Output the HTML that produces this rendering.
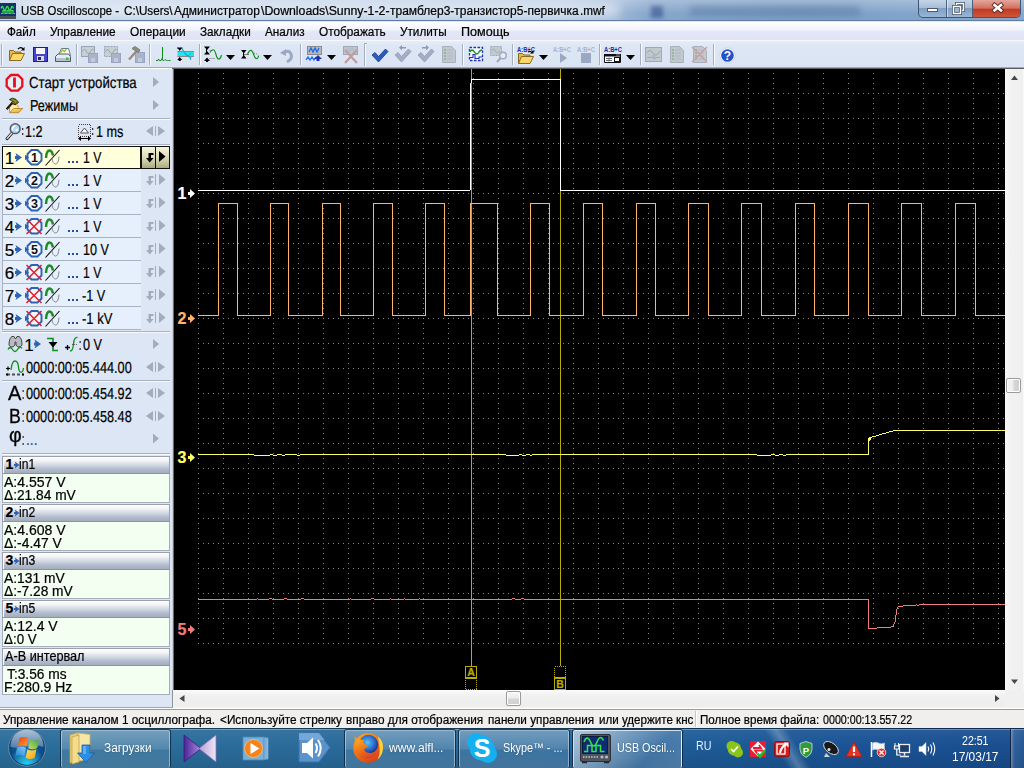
<!DOCTYPE html>
<html lang="ru"><head><meta charset="utf-8"><title>USB Oscilloscope</title>
<style>
html,body{margin:0;padding:0;background:#000;}
body{width:1024px;height:768px;overflow:hidden;font-family:"Liberation Sans",sans-serif;}
#screen{position:relative;width:1024px;height:768px;overflow:hidden;background:#dde6f4;}
.t{position:absolute;-webkit-text-stroke:.22px currentColor;transform-origin:0 0;white-space:pre;font-family:"Liberation Sans",sans-serif;}
.r{position:absolute;}
svg{position:absolute;overflow:visible;}

</style></head>
<body>
<div id="screen">
<!-- 10_title.py -->
<div class="r" style="left:0;top:0;width:1024px;height:22px;background:linear-gradient(90deg,#c3d4e9 0,#bdd0e7 200px,#b4c9e3 560px,#9fb9d8 615px,#86a6cb 650px,#7d9fc6 800px,#86a8cd 1024px)"></div>
<div class="r" style="left:0;top:0;width:1024px;height:20px;background:linear-gradient(180deg,rgba(255,255,255,.28),rgba(255,255,255,0) 70%)"></div>
<div class="r" style="left:690px;top:6px;width:170px;height:10px;background:rgba(60,90,140,.30);filter:blur(3px)"></div>
<div class="r" style="left:651px;top:6px;width:12px;height:12px;background:rgba(40,60,130,.5);filter:blur(2px)"></div>
<div class="r" style="left:20px;top:3px;width:600px;height:15px;background:rgba(255,255,255,.45);filter:blur(5px);border-radius:8px"></div>
<div class="r" style="left:0;top:20px;width:1024px;height:1px;background:#5f7da4"></div>
<div class="r" style="left:0;top:21px;width:1024px;height:1px;background:#dfe9f5"></div>
<svg style="left:0;top:3px" width="16" height="17" viewBox="0 0 16 17"><rect x="0" y="0" width="16" height="13" fill="#16306a"/><rect x="0" y="13" width="16" height="3" fill="#4a4e55"/><path d="M1 5.5q1.2-4 2.5 0t2.5 0t2.5 0t2.5 0t2.5 0" stroke="#35e24a" stroke-width="1.3" fill="none"/><path d="M1 10.5h2v-3h2v3h2v-3h2v3h2v-3h2v3h2" stroke="#35e24a" stroke-width="1.2" fill="none"/></svg>
<span class="t" style="left:21.40px;top:4.00px;font-size:12.30px;line-height:14px;color:#000;transform:scaleX(0.9259);">USB Oscilloscope -</span>
<span class="t" style="left:124.40px;top:4.00px;font-size:12.30px;line-height:14px;color:#000;transform:scaleX(0.9483);">C:\Users\</span>
<span class="t" style="left:173.60px;top:4.00px;font-size:12.30px;line-height:14px;color:#000;transform:scaleX(0.9668);">Администратор</span>
<span class="t" style="left:260.50px;top:4.00px;font-size:12.30px;line-height:14px;color:#000;transform:scaleX(0.9998);">\Downloads\Sunny-1-2-</span>
<span class="t" style="left:390.20px;top:4.00px;font-size:12.30px;line-height:14px;color:#000;transform:scaleX(0.9760);">трамблер3-транзистор5-первичка</span>
<span class="t" style="left:580.00px;top:4.00px;font-size:12.30px;line-height:14px;color:#000;transform:scaleX(0.9514);">.mwf</span>
<div class="r" style="left:918px;top:0;width:103px;height:18px;border:1px solid #3e5572;border-top:none;border-radius:0 0 5px 5px;box-sizing:border-box;overflow:hidden;background:linear-gradient(180deg,#c4d4e6 0,#a9bfd8 45%,#7f9fc3 50%,#9ab6d4 100%)"><div class="r" style="left:27px;top:0;width:1px;height:18px;background:#4b627f"></div><div class="r" style="left:28px;top:0;width:1px;height:18px;background:rgba(255,255,255,.5)"></div><div class="r" style="left:53px;top:0;width:1px;height:18px;background:#4b627f"></div><div class="r" style="left:54px;top:0;width:48px;height:18px;background:linear-gradient(180deg,#e2a79c 0,#d4705f 45%,#c03a26 52%,#cf5a3a 100%)"></div></div>
<svg style="left:918px;top:0" width="103" height="18" viewBox="0 0 103 18"><rect x="9.5" y="8.5" width="10" height="3" fill="#fff" stroke="#4b5a70" stroke-width="1"/><rect x="38.500" y="3.5" width="7" height="7" fill="none" stroke="#4b5a70" stroke-width="3"/><rect x="38.500" y="3.500" width="7" height="7" fill="none" stroke="#fff" stroke-width="1.400"/><rect x="35.500" y="6.500" width="7" height="7" fill="#9fb6d0" stroke="#4b5a70" stroke-width="3"/><rect x="35.500" y="6.500" width="7" height="7" fill="none" stroke="#fff" stroke-width="1.400"/><path d="M76.500 5l6.500 5.500M83 5l-6.500 5.500" stroke="#5c2a22" stroke-width="4.400" stroke-linecap="square"/><path d="M76.500 5l6.500 5.500M83 5l-6.500 5.500" stroke="#fff" stroke-width="2.600" stroke-linecap="square"/></svg>
<div class="r" style="left:0;top:22px;width:1024px;height:19px;background:linear-gradient(180deg,#ffffff 0,#f1f3fb 40%,#e3e6f6 52%,#dfe3f4 100%)"></div>
<div class="r" style="left:0;top:40px;width:1024px;height:1px;background:#f6f8fc"></div>
<span class="t" style="left:7.30px;top:25.00px;font-size:12.30px;line-height:14px;color:#000;transform:scaleX(0.9491);">Файл</span>
<span class="t" style="left:50.30px;top:25.00px;font-size:12.30px;line-height:14px;color:#000;transform:scaleX(0.9609);">Управление</span>
<span class="t" style="left:130.30px;top:25.00px;font-size:12.30px;line-height:14px;color:#000;transform:scaleX(0.9681);">Операции</span>
<span class="t" style="left:200.30px;top:25.00px;font-size:12.30px;line-height:14px;color:#000;transform:scaleX(0.9524);">Закладки</span>
<span class="t" style="left:265.30px;top:25.00px;font-size:12.30px;line-height:14px;color:#000;transform:scaleX(0.9560);">Анализ</span>
<span class="t" style="left:319.30px;top:25.00px;font-size:12.30px;line-height:14px;color:#000;transform:scaleX(0.9602);">Отображать</span>
<span class="t" style="left:400.30px;top:25.00px;font-size:12.30px;line-height:14px;color:#000;transform:scaleX(0.9562);">Утилиты</span>
<span class="t" style="left:461.30px;top:25.00px;font-size:12.30px;line-height:14px;color:#000;transform:scaleX(1.0251);">Помощь</span>
<!-- 20_toolbar.py -->
<div class="r" style="left:0;top:41px;width:1024px;height:26px;background:linear-gradient(180deg,#e6edf8 0,#dde6f4 20%,#dbe4f3 100%)"></div>
<div class="r" style="left:0;top:67px;width:1024px;height:1px;background:#a4a8b0"></div>
<div class="r" style="left:0;top:68px;width:172px;height:1px;background:#ffffff"></div>
<div class="r" style="left:172px;top:68px;width:852px;height:1px;background:#5a5c60"></div>
<svg style="left:0;top:41px" width="1024" height="27" viewBox="0 41 1024 27" fill="none">
<path d="M1.5 44V65" stroke="#a3adbf" shape-rendering="crispEdges"/><path d="M2.5 44V65" stroke="#f6f8fc" shape-rendering="crispEdges"/>
<path d="M76.5 44V65" stroke="#a3adbf" shape-rendering="crispEdges"/><path d="M77.5 44V65" stroke="#fbfcfe" shape-rendering="crispEdges"/>
<path d="M149.5 44V65" stroke="#a3adbf" shape-rendering="crispEdges"/><path d="M150.5 44V65" stroke="#fbfcfe" shape-rendering="crispEdges"/>
<path d="M199.5 44V65" stroke="#a3adbf" shape-rendering="crispEdges"/><path d="M200.5 44V65" stroke="#fbfcfe" shape-rendering="crispEdges"/>
<path d="M300.5 44V65" stroke="#a3adbf" shape-rendering="crispEdges"/><path d="M301.5 44V65" stroke="#fbfcfe" shape-rendering="crispEdges"/>
<path d="M462.5 44V65" stroke="#a3adbf" shape-rendering="crispEdges"/><path d="M463.5 44V65" stroke="#fbfcfe" shape-rendering="crispEdges"/>
<path d="M512.5 44V65" stroke="#a3adbf" shape-rendering="crispEdges"/><path d="M513.5 44V65" stroke="#fbfcfe" shape-rendering="crispEdges"/>
<path d="M599.5 44V65" stroke="#a3adbf" shape-rendering="crispEdges"/><path d="M600.5 44V65" stroke="#fbfcfe" shape-rendering="crispEdges"/>
<path d="M640.5 44V65" stroke="#a3adbf" shape-rendering="crispEdges"/><path d="M641.5 44V65" stroke="#fbfcfe" shape-rendering="crispEdges"/>
<path d="M713.5 44V65" stroke="#a3adbf" shape-rendering="crispEdges"/><path d="M714.5 44V65" stroke="#fbfcfe" shape-rendering="crispEdges"/>
<path d="M364.500 43V66" stroke="#a3adbf" shape-rendering="crispEdges"/><path d="M365.500 43V66" stroke="#fbfcfe" shape-rendering="crispEdges"/><path d="M364 43.500h3" stroke="#a3adbf"/>
<path d="M226 55h9l-4.500 5z" fill="#000"/>
<path d="M263 55h9l-4.500 5z" fill="#000"/>
<path d="M327 55h9l-4.500 5z" fill="#000"/>
<path d="M539 55h9l-4.500 5z" fill="#000"/>
<path d="M626 55h9l-4.500 5z" fill="#000"/>
<g transform="translate(9,47)"><path d="M0.500 13.500V3.500h4l1.500 1.500h6v2" fill="#e8b848" stroke="#8a6a1c"/><path d="M0.500 13.500l3-7h12l-3.500 7z" fill="#fbd66a" stroke="#8a6a1c"/><path d="M9 2q3-3 5.500 0.500" stroke="#000" stroke-width="1.200"/><path d="M15.500 0v3.500h-3.500z" fill="#000"/></g>
<g transform="translate(33,47)"><rect x="0.500" y="0.500" width="14" height="14" fill="#4a46c8" stroke="#24207a"/><rect x="3" y="1" width="9" height="6" fill="#f4f4fa"/><rect x="4" y="9" width="7" height="5" fill="#d8d8e4"/><rect x="5" y="10" width="3" height="3" fill="#24207a"/></g>
<g transform="translate(55,47)"><path d="M3.500 8.500l3-7h7l2 7z" fill="#fff" stroke="#707888"/><path d="M5.500 6l2-3 2 1.500 2-2.500" stroke="#8acb20" stroke-width="1.300"/><path d="M0.500 9.500l2.500-2.500h10.500l2 2.500v5h-15z" fill="#e8ecf2" stroke="#505868"/><rect x="1" y="11" width="14" height="3" fill="#b8c0cc"/><rect x="11" y="10.500" width="2.500" height="2.500" fill="#20d020"/></g>
<g transform="translate(81,46)"><rect x="0.500" y="0.500" width="13" height="10" fill="#c6cfd9" stroke="#98a4b4"/><path d="M1.500 5.500q2-4 4 0t4 0t3.500-1" stroke="#8fb08f"/><rect x="7.500" y="7.500" width="9" height="9" fill="#a9b4cb" stroke="#98a4c0"/><rect x="10" y="12" width="4" height="4" fill="#c3cbdb"/></g>
<g transform="translate(104,46)"><rect x="0.500" y="0.500" width="13" height="10" fill="#c6cfd9" stroke="#98a4b4" stroke-dasharray="2 1"/><path d="M1.500 5.500q2-4 4 0t4 0t3.500-1" stroke="#8fb08f"/><rect x="7.500" y="7.500" width="9" height="9" fill="#a9b4cb" stroke="#98a4c0"/><rect x="10" y="12" width="4" height="4" fill="#c3cbdb"/></g>
<g transform="translate(128,46)"><rect x="7.500" y="6.500" width="9" height="10" fill="#a9b4cb" stroke="#98a4c0"/><rect x="10" y="12" width="4" height="4" fill="#c3cbdb"/><path d="M1 13.500l8-9" stroke="#9a8a7a" stroke-width="2.200"/><path d="M4 2.500l3-2 5 3.500-1.500 2.500z" fill="#8a8f80" stroke="#7a7f74"/></g>
<path d="M162.500 47V60" stroke="#108a18" stroke-width="1" shape-rendering="crispEdges"/><path d="M156 60.500h2l.500-1.500 1 1.500h1.500l1-2 1 2h1l1-1 1.500 1h1l.500-.500.500.500h2" stroke="#108a18" stroke-width="1"/>
<g><rect x="177.500" y="51" width="16.500" height="6" fill="#22e6ee"/><path d="M177.500 51.500h16.500M177.500 56.500h16.500" stroke="#94848a" stroke-width="1"/><path d="M182 48.500l2 3.500q2 3.500 4.500 4.500l2 .800v2.500" stroke="#10b4c4" stroke-width="1.300" fill="none"/><path d="M186 55.500q3 1 5-2.500" stroke="#10b4c4" stroke-width="1"/><path d="M177 47.500h5.500v1h-1l-1.750 2.500l-1.750-2.500h-1zM179.750 57l2.500 3h-1.500v1h-2v-1h-1.500z" fill="#000"/></g>
<g><path d="M204 46.500h6l-3 3.500zM204 54.500h6l-3-3.500zM207 57.500l3 3.500h-2v1h-2v-1h-2z" fill="#000"/><path d="M206.500 48v5" stroke="#000" stroke-width="1"/><path d="M209.500 50.500h4M209.500 58.500h6" stroke="#707070" stroke-dasharray="1 1"/><path d="M210 52.500q1.500-2.800 3-2.800q1.800 0 3 4.800t3 4.500q1.500 0 2.500-4" stroke="#10901c" stroke-width="1.150" fill="none"/></g>
<g><path d="M241 50h5.500l-2.750 3.500zM241 58.500h5.500l-2.750-3.500z" fill="#000"/><path d="M243.500 52v5" stroke="#000"/><path d="M244 54.500h5" stroke="#808080"/><path d="M247.500 54.500q1.500-4.200 3.200-4.200q1.800 0 3 4.200t3 4.200q1.300 0 2-3" stroke="#10901c" stroke-width="1.150" fill="none"/><path d="M254 53.500q2.500-.500 4 1.500" stroke="#808080" stroke-dasharray="1 1" fill="none"/></g>
<g transform="translate(280,48)"><path d="M3 5q6-4 8 1t-4 8" stroke="#9aa8c4" stroke-width="3"/><path d="M0 5l6-4v7z" fill="#9aa8c4"/></g>
<g transform="translate(306,46)"><rect x="1.500" y="0.500" width="14" height="8" fill="#b8b8b8" stroke="#8c8c8c"/><path d="M3 6l2-4 2 4 2-4 2 4 2-4" stroke="#1c6cf0" stroke-width="1.300"/><path d="M0 14l2-3 2 3 2-3 2 3 2-3" stroke="#1c6cf0" stroke-width="1.300"/><path d="M12 9l4 4h-2.500v2h-3v-2h-2.500z" fill="#2030b0"/></g>
<g transform="translate(343,46)"><rect x="0.500" y="0.500" width="14" height="8" fill="#c0c4cc" stroke="#a0a8b4"/><path d="M3 6l2-4 2 4 2-4 2 4" stroke="#a8b8d8"/><path d="M2 4l12 13M14 4l-12 13" stroke="#c09c9c" stroke-width="2.200"/></g>
<path d="M372 55l3-2.500 3.500 4 7-7.500 2.500 2.500-9.500 10.500z" fill="#2a5cc0" stroke="#163a8c" stroke-width="0.800"/>
<path d="M395 55l3-2.500 3.500 4 7-7.500 2.500 2.500-9.500 10.500z" fill="#a3aec6" stroke="#8e9ab4" stroke-width="0.800"/>
<path d="M399 47.500l3-2.500v2h4v1.500h-4v2z" fill="#8e9ab4"/>
<path d="M418 55l3-2.500 3.500 4 7-7.500 2.500 2.500-9.500 10.500z" fill="#a3aec6" stroke="#8e9ab4" stroke-width="0.800"/>
<path d="M429 47.500l-3-2.500v2h-4v1.500h4v2z" fill="#8e9ab4"/>
<g transform="translate(442,46)"><path d="M0.500 0.500h9l4 4v12h-13z" fill="#c2c8d0" stroke="#a8b0bc"/><path d="M2 4h2M2 7h2M2 10h2M2 13h2" stroke="#8cb08c" stroke-width="1.300"/><path d="M5 4h6M5 7h6M5 10h6M5 13h6" stroke="#b0b8c4"/></g>
<g transform="translate(468,46)"><rect x="2" y="2" width="12" height="12" fill="#f4f8ff"/><path d="M1.500 1.500h13v13h-13z" stroke="#2030b0" stroke-width="1.300" stroke-dasharray="2.500 1.500"/><path d="M2 6q2-4 4.500 0t4.500 0q1-2 3-2" stroke="#10901c" stroke-width="1.400"/><path d="M2 11.500h3v-3h2v4h4v-1.500h3" stroke="#2030b0" stroke-width="1.100"/></g>
<g transform="translate(490,46)"><rect x="0.500" y="0.500" width="11" height="9" fill="#c2c8d0" stroke="#a0a8b8" stroke-dasharray="2 1"/><path d="M1.500 5q2-4 4 0t4 0" stroke="#9cb49c"/><circle cx="13" cy="9.500" r="3.300" fill="#e4ebf6" stroke="#a0a8bc" stroke-width="1.400"/><path d="M10.500 12l-3.500 4" stroke="#a0a8bc" stroke-width="2"/></g>
<text x="517" y="52" font-family="Liberation Sans,sans-serif" font-size="7.500" font-weight="bold" fill="#1c2ca4" textLength="18" lengthAdjust="spacingAndGlyphs">A:B+C</text>
<g transform="translate(518,50)"><path d="M0.500 13.500V3.500h4l1.500 1.500h6v2" fill="#e8b848" stroke="#8a6a1c"/><path d="M0.500 13.500l3-7h12l-3.500 7z" fill="#fbd66a" stroke="#8a6a1c"/><path d="M10 2q3-1.500 4 1" stroke="#000" stroke-width="1.200"/><path d="M15.500 0v3.500h-3.500z" fill="#000"/></g>
<text x="553" y="52" font-family="Liberation Sans,sans-serif" font-size="7.500" font-weight="bold" fill="#a8b4cc" textLength="18" lengthAdjust="spacingAndGlyphs">A:B+C</text>
<path d="M560 53v10l7-5z" fill="#9aa8c4"/>
<text x="577" y="52" font-family="Liberation Sans,sans-serif" font-size="7.500" font-weight="bold" fill="#a8b4cc" textLength="18" lengthAdjust="spacingAndGlyphs">A:B+C</text>
<rect x="581" y="53" width="10" height="10" fill="#9aa8c4"/>
<text x="604" y="52" font-family="Liberation Sans,sans-serif" font-size="7.500" font-weight="bold" fill="#1c2ca4" textLength="18" lengthAdjust="spacingAndGlyphs">A:B+C</text>
<g transform="translate(604,54)"><rect x="0" y="0" width="17" height="9" fill="#fff"/><rect x="0" y="0" width="17" height="2.500" fill="#101018"/><path d="M0.500 0v8.500h16v-8.500" stroke="#101018"/><path d="M2 4.500h6M2 6.500h6M5 3.500v4" stroke="#606878"/><rect x="10.500" y="3.500" width="5" height="4" fill="#fff" stroke="#101018"/><path d="M12.500 1h1M14.500 1h1" stroke="#fff"/></g>
<g transform="translate(645,47)"><rect x="0.500" y="0.500" width="16" height="14" fill="#c2c8d0" stroke="#a0a8b4"/><path d="M2 6q3-5 6 0t7-2" stroke="#8fb08f"/><path d="M2 10.500h6v-2h1v3.500h1v-1.500h5" stroke="#a0a8c8"/></g>
<g transform="translate(670,46)"><path d="M0.500 0.500h9l4 4v12h-13z" fill="#c2c8d0" stroke="#a8b0bc"/><path d="M2 4h2M2 7h2M2 10h2M2 13h2" stroke="#8cb08c" stroke-width="1.300"/><path d="M5 4h6M5 7h6M5 10h6M5 13h6" stroke="#b0b8c4"/></g>
<g transform="translate(693,46)"><path d="M0.500 0.500h9l4 4v12h-13z" fill="#c2c8d0" stroke="#a8b0bc"/><path d="M2 4h2M2 7h2M2 10h2M2 13h2" stroke="#8cb08c" stroke-width="1.300"/><path d="M5 4h6M5 7h6M5 10h6M5 13h6" stroke="#b0b8c4"/><path d="M-1 1l15 15M14 1l-15 15" stroke="#cfa0a0" stroke-width="1.500"/></g>
<circle cx="727.500" cy="55.500" r="7.500" fill="#fff"/><circle cx="727.500" cy="55.500" r="6.300" fill="#2450c8"/><circle cx="727.500" cy="55.500" r="7.600" stroke="#c8d0e0" stroke-width="0.800"/><text x="727.500" y="60" text-anchor="middle" font-family="Liberation Sans,sans-serif" font-size="12" font-weight="bold" fill="#fff">?</text>
</svg>
<!-- 30_left.py -->
<div class="r" style="left:0;top:69px;width:172px;height:641px;background:#dde6f4"></div>
<div class="r" style="left:172px;top:69px;width:1px;height:621px;background:#c9cfd8"></div>
<div class="r" style="left:173px;top:69px;width:1px;height:621px;background:#6b6d70"></div>
<div class="r" style="left:2px;top:118px;width:168px;height:1px;background:#a9b2c3"></div><div class="r" style="left:2px;top:119px;width:168px;height:1px;background:#f7f9fd"></div>
<div class="r" style="left:2px;top:144px;width:168px;height:1px;background:#a9b2c3"></div><div class="r" style="left:2px;top:145px;width:168px;height:1px;background:#f7f9fd"></div>
<div class="r" style="left:2px;top:331px;width:168px;height:1px;background:#a9b2c3"></div><div class="r" style="left:2px;top:332px;width:168px;height:1px;background:#f7f9fd"></div>
<div class="r" style="left:2px;top:380px;width:168px;height:1px;background:#a9b2c3"></div><div class="r" style="left:2px;top:381px;width:168px;height:1px;background:#f7f9fd"></div>
<div class="r" style="left:2px;top:453px;width:168px;height:1px;background:#a9b2c3"></div><div class="r" style="left:2px;top:454px;width:168px;height:1px;background:#f7f9fd"></div>
<svg style="left:0;top:69px" width="174" height="400" viewBox="0 69 174 400" fill="none">
<path d="M153 77v10l6-5z" fill="#a3acba"/>
<path d="M153 100v10l6-5z" fill="#a3acba"/>
<path d="M153 126v10l-7-5z" fill="#a3acba"/><path d="M155.500 126v10" stroke="#a3acba" shape-rendering="crispEdges"/><path d="M158 126v10l7-5z" fill="#a3acba"/>
<path d="M153 339v10l6-5z" fill="#a3acba"/>
<path d="M153 362v10l-7-5z" fill="#a3acba"/><path d="M155.500 362v10" stroke="#a3acba" shape-rendering="crispEdges"/><path d="M158 362v10l7-5z" fill="#a3acba"/>
<path d="M153 388v10l-7-5z" fill="#a3acba"/><path d="M155.500 388v10" stroke="#a3acba" shape-rendering="crispEdges"/><path d="M158 388v10l7-5z" fill="#a3acba"/>
<path d="M153 411v10l-7-5z" fill="#a3acba"/><path d="M155.500 411v10" stroke="#a3acba" shape-rendering="crispEdges"/><path d="M158 411v10l7-5z" fill="#a3acba"/>
<path d="M153 433.5v10l6-5z" fill="#a3acba"/>
<path d="M11 75h7l4.300 4.300v7l-4.300 4.300h-7l-4.300-4.300v-7z" stroke="#e4101c" stroke-width="2.300" fill="#fff" fill-opacity=".3"/><path d="M14.500 77.500v10" stroke="#e4101c" stroke-width="2.800"/>
<g><path d="M9.500 112.500v-6.500l1.500-1.500h6l1 1.500v3" fill="#fbe9a8" stroke="#c89c38" stroke-width=".9"/><path d="M9.500 112.700l4.300-4.200h9l-4.300 4.200z" fill="url(#fold)" stroke="#a87c20" stroke-width=".8"/><path d="M6.600 109.300l6-6.800" stroke="#140808" stroke-width="2.100"/><path d="M7.300 108.600l5-5.700" stroke="#d41c1c" stroke-width=".9" stroke-dasharray="1 1"/><path d="M9.500 99.500l3-1.300l3.500 1.200l2.500 2.800l-1 1.200l-1.300-.400l-.700 1.800l-1.800-.600l.300-1.800l-2.300-1.600z" fill="#8c8c14" stroke="#181808" stroke-width=".9"/></g>
<g><path d="M12.300 132.700l-5.300 6" stroke="#2c2c30" stroke-width="3" stroke-linecap="round"/><path d="M12 133l-4.800 5.400" stroke="#e4e6ea" stroke-width="1.300" stroke-linecap="round"/><circle cx="15.200" cy="128.700" r="4.900" fill="#b4d6f8" stroke="#5a5e66" stroke-width="1.500"/><path d="M12.600 130.500q-.800-3.500 2.800-4.700" stroke="#fff" stroke-width="1.600" fill="none"/><circle cx="16.800" cy="130" r="1.600" fill="#e8f4ff"/></g>
<g transform="translate(78,124)"><rect x="0.500" y="0.500" width="12" height="12" stroke="#404040" stroke-dasharray="1 1" shape-rendering="crispEdges"/><path d="M6.500 4l4 5h-8z" stroke="#505050" fill="#fff"/><path d="M1 14.500h11" stroke="#000"/><path d="M0 14.500l3-2.500v5zM13 14.500l-3-2.500v5z" fill="#000"/></g>
<rect x="2.500" y="146.5" width="138" height="22" fill="#ffffdc" stroke="#101010" shape-rendering="crispEdges"/>
<rect x="141.500" y="146.5" width="14" height="22" fill="url(#kh)" stroke="#101010" shape-rendering="crispEdges"/><rect x="155.500" y="146.5" width="14" height="22" fill="url(#kh)" stroke="#101010" shape-rendering="crispEdges"/>
<path d="M159 151v11l6.500-5.500z" fill="#000"/>
<path d="M146 158h7.500l-3.750 4.500z" fill="#000"/><path d="M148.500 158h2.500v-3h2.500v-2h-5z" fill="#000"/>
<path d="M15 156h1.500l-1-3l6.500 4.500l-6.500 4.500l1-3h-1.500z" fill="#2f63ae"/>
<path d="M31.500 150h6l4 4v6.500l-4 4h-6l-4-4v-6.500z" stroke="#2f63b0" stroke-width="1.900" fill="#fff" fill-opacity=".55"/>
<path d="M25 154.7l4 2.800l-4 2.800z" fill="#2f63ae"/>
<text x="34.600" y="162.1" text-anchor="middle" font-family="Liberation Sans,sans-serif" font-size="12.500" font-weight="bold" fill="#101010">1</text>
<path d="M45.500 165.5l14-15.500" stroke="#101010" stroke-width="1.100"/>
<path d="M46 158q0.500-7.500 3.500-7.500q2.500 0 3.500 5" stroke="#1c8c20" stroke-width="2.500"/>
<path d="M52 158.5q0.500 5 3.500 5.500q3 0 3.500-7.500" stroke="#808890" stroke-width="1"/>
<rect x="68" y="161" width="2" height="2" fill="#244c9c"/><rect x="72" y="161" width="2" height="2" fill="#244c9c"/><rect x="76" y="161" width="2" height="2" fill="#244c9c"/>
<rect x="3" y="169" width="138" height="22" fill="#e6f0fc" stroke="none"/>
<path d="M2.500 169v22.500h138" stroke="#a9b2c3" shape-rendering="crispEdges"/>
<path d="M146 181h7.500l-3.750 4.500z" fill="#a3acba"/><path d="M148.500 181h2.500v-3h2.500v-2h-5z" fill="#a3acba"/><path d="M155.500 174v11" stroke="#a3acba" shape-rendering="crispEdges"/><path d="M159 174v11l6.500-5.500z" fill="#a3acba"/>
<path d="M15 179h1.500l-1-3l6.500 4.500l-6.500 4.500l1-3h-1.500z" fill="#2f63ae"/>
<path d="M31.500 173h6l4 4v6.500l-4 4h-6l-4-4v-6.500z" stroke="#2f63b0" stroke-width="1.900" fill="#fff" fill-opacity=".55"/>
<path d="M25 177.7l4 2.800l-4 2.800z" fill="#2f63ae"/>
<text x="34.600" y="185.1" text-anchor="middle" font-family="Liberation Sans,sans-serif" font-size="12.500" font-weight="bold" fill="#101010">2</text>
<path d="M45.500 188.5l14-15.500" stroke="#101010" stroke-width="1.100"/>
<path d="M46 181q0.500-7.500 3.500-7.500q2.500 0 3.500 5" stroke="#1c8c20" stroke-width="2.500"/>
<path d="M52 181.5q0.500 5 3.500 5.500q3 0 3.500-7.500" stroke="#808890" stroke-width="1"/>
<rect x="68" y="184" width="2" height="2" fill="#244c9c"/><rect x="72" y="184" width="2" height="2" fill="#244c9c"/><rect x="76" y="184" width="2" height="2" fill="#244c9c"/>
<rect x="3" y="192" width="138" height="22" fill="#e6f0fc" stroke="none"/>
<path d="M2.500 192v22.500h138" stroke="#a9b2c3" shape-rendering="crispEdges"/>
<path d="M146 204h7.500l-3.750 4.500z" fill="#a3acba"/><path d="M148.500 204h2.500v-3h2.500v-2h-5z" fill="#a3acba"/><path d="M155.500 197v11" stroke="#a3acba" shape-rendering="crispEdges"/><path d="M159 197v11l6.500-5.500z" fill="#a3acba"/>
<path d="M15 202h1.500l-1-3l6.500 4.500l-6.500 4.500l1-3h-1.500z" fill="#2f63ae"/>
<path d="M31.500 196h6l4 4v6.500l-4 4h-6l-4-4v-6.500z" stroke="#2f63b0" stroke-width="1.900" fill="#fff" fill-opacity=".55"/>
<path d="M25 200.7l4 2.800l-4 2.800z" fill="#2f63ae"/>
<text x="34.600" y="208.1" text-anchor="middle" font-family="Liberation Sans,sans-serif" font-size="12.500" font-weight="bold" fill="#101010">3</text>
<path d="M45.500 211.5l14-15.500" stroke="#101010" stroke-width="1.100"/>
<path d="M46 204q0.500-7.500 3.500-7.500q2.500 0 3.500 5" stroke="#1c8c20" stroke-width="2.500"/>
<path d="M52 204.5q0.500 5 3.500 5.500q3 0 3.500-7.500" stroke="#808890" stroke-width="1"/>
<rect x="68" y="207" width="2" height="2" fill="#244c9c"/><rect x="72" y="207" width="2" height="2" fill="#244c9c"/><rect x="76" y="207" width="2" height="2" fill="#244c9c"/>
<rect x="3" y="215" width="138" height="22" fill="#e6f0fc" stroke="none"/>
<path d="M2.500 215v22.500h138" stroke="#a9b2c3" shape-rendering="crispEdges"/>
<path d="M146 227h7.500l-3.750 4.500z" fill="#a3acba"/><path d="M148.500 227h2.500v-3h2.500v-2h-5z" fill="#a3acba"/><path d="M155.500 220v11" stroke="#a3acba" shape-rendering="crispEdges"/><path d="M159 220v11l6.500-5.500z" fill="#a3acba"/>
<path d="M15 225h1.500l-1-3l6.500 4.500l-6.500 4.500l1-3h-1.500z" fill="#2f63ae"/>
<path d="M31.500 219h6l4 4v6.500l-4 4h-6l-4-4v-6.500z" stroke="#2f63b0" stroke-width="1.900" fill="#fff" fill-opacity=".55"/>
<path d="M25 223.7l4 2.800l-4 2.800z" fill="#2f63ae"/>
<path d="M26.500 219l15 15M41.500 219l-15 15" stroke="#e8202c" stroke-width="1.600"/>
<path d="M45.500 234.5l14-15.500" stroke="#101010" stroke-width="1.100"/>
<path d="M46 227q0.500-7.500 3.500-7.500q2.500 0 3.500 5" stroke="#1c8c20" stroke-width="2.500"/>
<path d="M52 227.5q0.500 5 3.500 5.500q3 0 3.500-7.500" stroke="#808890" stroke-width="1"/>
<rect x="68" y="230" width="2" height="2" fill="#244c9c"/><rect x="72" y="230" width="2" height="2" fill="#244c9c"/><rect x="76" y="230" width="2" height="2" fill="#244c9c"/>
<rect x="3" y="238" width="138" height="22" fill="#e6f0fc" stroke="none"/>
<path d="M2.500 238v22.500h138" stroke="#a9b2c3" shape-rendering="crispEdges"/>
<path d="M146 250h7.500l-3.750 4.500z" fill="#a3acba"/><path d="M148.500 250h2.500v-3h2.500v-2h-5z" fill="#a3acba"/><path d="M155.500 243v11" stroke="#a3acba" shape-rendering="crispEdges"/><path d="M159 243v11l6.500-5.500z" fill="#a3acba"/>
<path d="M15 248h1.500l-1-3l6.500 4.500l-6.500 4.500l1-3h-1.500z" fill="#2f63ae"/>
<path d="M31.500 242h6l4 4v6.500l-4 4h-6l-4-4v-6.500z" stroke="#2f63b0" stroke-width="1.900" fill="#fff" fill-opacity=".55"/>
<path d="M25 246.7l4 2.800l-4 2.800z" fill="#2f63ae"/>
<text x="34.600" y="254.1" text-anchor="middle" font-family="Liberation Sans,sans-serif" font-size="12.500" font-weight="bold" fill="#101010">5</text>
<path d="M45.500 257.5l14-15.500" stroke="#101010" stroke-width="1.100"/>
<path d="M46 250q0.500-7.500 3.500-7.500q2.500 0 3.500 5" stroke="#1c8c20" stroke-width="2.500"/>
<path d="M52 250.5q0.500 5 3.500 5.500q3 0 3.500-7.500" stroke="#808890" stroke-width="1"/>
<rect x="68" y="253" width="2" height="2" fill="#244c9c"/><rect x="72" y="253" width="2" height="2" fill="#244c9c"/><rect x="76" y="253" width="2" height="2" fill="#244c9c"/>
<rect x="3" y="261" width="138" height="22" fill="#e6f0fc" stroke="none"/>
<path d="M2.500 261v22.500h138" stroke="#a9b2c3" shape-rendering="crispEdges"/>
<path d="M146 273h7.500l-3.750 4.500z" fill="#a3acba"/><path d="M148.500 273h2.500v-3h2.500v-2h-5z" fill="#a3acba"/><path d="M155.500 266v11" stroke="#a3acba" shape-rendering="crispEdges"/><path d="M159 266v11l6.500-5.500z" fill="#a3acba"/>
<path d="M15 271h1.500l-1-3l6.500 4.500l-6.500 4.500l1-3h-1.500z" fill="#2f63ae"/>
<path d="M31.500 265h6l4 4v6.500l-4 4h-6l-4-4v-6.500z" stroke="#2f63b0" stroke-width="1.900" fill="#fff" fill-opacity=".55"/>
<path d="M25 269.7l4 2.800l-4 2.800z" fill="#2f63ae"/>
<path d="M26.500 265l15 15M41.500 265l-15 15" stroke="#e8202c" stroke-width="1.600"/>
<path d="M45.500 280.5l14-15.500" stroke="#101010" stroke-width="1.100"/>
<path d="M46 273q0.500-7.500 3.500-7.500q2.500 0 3.500 5" stroke="#1c8c20" stroke-width="2.500"/>
<path d="M52 273.5q0.500 5 3.500 5.500q3 0 3.500-7.500" stroke="#808890" stroke-width="1"/>
<rect x="68" y="276" width="2" height="2" fill="#244c9c"/><rect x="72" y="276" width="2" height="2" fill="#244c9c"/><rect x="76" y="276" width="2" height="2" fill="#244c9c"/>
<rect x="3" y="284" width="138" height="22" fill="#e6f0fc" stroke="none"/>
<path d="M2.500 284v22.500h138" stroke="#a9b2c3" shape-rendering="crispEdges"/>
<path d="M146 296h7.500l-3.750 4.500z" fill="#a3acba"/><path d="M148.500 296h2.500v-3h2.500v-2h-5z" fill="#a3acba"/><path d="M155.500 289v11" stroke="#a3acba" shape-rendering="crispEdges"/><path d="M159 289v11l6.500-5.500z" fill="#a3acba"/>
<path d="M15 294h1.500l-1-3l6.500 4.500l-6.500 4.500l1-3h-1.500z" fill="#2f63ae"/>
<path d="M31.500 288h6l4 4v6.500l-4 4h-6l-4-4v-6.500z" stroke="#2f63b0" stroke-width="1.900" fill="#fff" fill-opacity=".55"/>
<path d="M25 292.7l4 2.800l-4 2.800z" fill="#2f63ae"/>
<path d="M26.500 288l15 15M41.500 288l-15 15" stroke="#e8202c" stroke-width="1.600"/>
<path d="M45.500 303.5l14-15.500" stroke="#101010" stroke-width="1.100"/>
<path d="M46 296q0.500-7.500 3.500-7.500q2.500 0 3.500 5" stroke="#1c8c20" stroke-width="2.500"/>
<path d="M52 296.5q0.500 5 3.500 5.500q3 0 3.500-7.500" stroke="#808890" stroke-width="1"/>
<rect x="68" y="299" width="2" height="2" fill="#244c9c"/><rect x="72" y="299" width="2" height="2" fill="#244c9c"/><rect x="76" y="299" width="2" height="2" fill="#244c9c"/>
<rect x="3" y="307" width="138" height="22" fill="#e6f0fc" stroke="none"/>
<path d="M2.500 307v22.500h138" stroke="#a9b2c3" shape-rendering="crispEdges"/>
<path d="M146 319h7.500l-3.750 4.500z" fill="#a3acba"/><path d="M148.500 319h2.500v-3h2.500v-2h-5z" fill="#a3acba"/><path d="M155.500 312v11" stroke="#a3acba" shape-rendering="crispEdges"/><path d="M159 312v11l6.500-5.500z" fill="#a3acba"/>
<path d="M15 317h1.500l-1-3l6.500 4.500l-6.500 4.500l1-3h-1.500z" fill="#2f63ae"/>
<path d="M31.500 311h6l4 4v6.500l-4 4h-6l-4-4v-6.500z" stroke="#2f63b0" stroke-width="1.900" fill="#fff" fill-opacity=".55"/>
<path d="M25 315.7l4 2.800l-4 2.800z" fill="#2f63ae"/>
<path d="M26.500 311l15 15M41.500 311l-15 15" stroke="#e8202c" stroke-width="1.600"/>
<path d="M45.500 326.5l14-15.500" stroke="#101010" stroke-width="1.100"/>
<path d="M46 319q0.500-7.500 3.500-7.500q2.500 0 3.500 5" stroke="#1c8c20" stroke-width="2.500"/>
<path d="M52 319.5q0.500 5 3.500 5.500q3 0 3.500-7.500" stroke="#808890" stroke-width="1"/>
<rect x="68" y="322" width="2" height="2" fill="#244c9c"/><rect x="72" y="322" width="2" height="2" fill="#244c9c"/><rect x="76" y="322" width="2" height="2" fill="#244c9c"/>
<defs><linearGradient id="fold" x1="0" y1="0" x2="1" y2="1"><stop offset="0" stop-color="#fde48c"/><stop offset="1" stop-color="#e8a420"/></linearGradient><linearGradient id="kh" x1="0" y1="0" x2="0" y2="1"><stop offset="0" stop-color="#f6f6e0"/><stop offset=".5" stop-color="#dcdcb8"/><stop offset="1" stop-color="#a8a880"/></linearGradient></defs>
<g transform="translate(8,336)"><path d="M1 9q0-7 3-8.500h2l1 2h1l1-2h2q3 1.500 3 8.500q-1 2-3 2t-3-2v-3h-1v3q-1 2-3 2t-3-2z" fill="#b8bcc0" stroke="#404448" stroke-width="1"/><path d="M0 13.500q2-4 4.500 0t5 0t4.500-1" stroke="#10901c" stroke-width="1.300"/></g>
<path d="M34 342.5h1.500l-1-3l6.500 4.500l-6.500 4.500l1-3h-1.500z" fill="#2f63ae"/>
<path d="M47 338.500h6v12h5" stroke="#10901c" stroke-width="1.600"/><path d="M48.500 342h9l-4.500 5.500z" fill="#000"/>
<path d="M65 347.500h5M67.500 345v5" stroke="#000" stroke-width="1.300"/><path d="M70 351q3 0 3.500-7t4-6.500" stroke="#10901c" stroke-width="1.300"/><path d="M72 344.500h6" stroke="#606060" stroke-dasharray="1 1"/>
<rect x="79.5" y="341" width="1.300" height="2" fill="#383838"/><rect x="79.5" y="348" width="1.300" height="2" fill="#383838"/>
<g transform="translate(6,360)"><path d="M0 8.500h4M2 6.500v4" stroke="#000" stroke-width="1.200"/><path d="M5 10q1-9 4-9t3.500 6t3 5q1.500 0 2-4" stroke="#10901c" stroke-width="1.300"/><path d="M1 14.500h16" stroke="#505050" stroke-width="2" stroke-dasharray="3 2"/><path d="M0 14.500h2M16 14.500h2" stroke="#000" stroke-width="2"/></g>
<rect x="22.5" y="390" width="1.300" height="2" fill="#383838"/><rect x="22.5" y="397" width="1.300" height="2" fill="#383838"/>
<rect x="22.5" y="413" width="1.300" height="2" fill="#383838"/><rect x="22.5" y="420" width="1.300" height="2" fill="#383838"/>
<rect x="22.5" y="436" width="1.300" height="2" fill="#383838"/><rect x="22.5" y="443" width="1.300" height="2" fill="#383838"/>
<rect x="22" y="128" width="1.300" height="2" fill="#383838"/><rect x="22" y="133" width="1.300" height="2" fill="#383838"/>
<rect x="92" y="128" width="1.300" height="2" fill="#383838"/><rect x="92" y="133" width="1.300" height="2" fill="#383838"/>
</svg>
<span class="t" style="left:29.30px;top:74.00px;font-size:16.00px;line-height:17px;color:#000;transform:rotate(0.05deg) scaleX(0.8262);">Старт устройства</span>
<span class="t" style="left:29.50px;top:97.00px;font-size:16.00px;line-height:17px;color:#000;transform:rotate(0.05deg) scaleX(0.7891);">Режимы</span>
<span class="t" style="left:25.30px;top:123.00px;font-size:16.00px;line-height:17px;color:#000;transform:rotate(0.05deg) scaleX(0.7868);">1:2</span>
<span class="t" style="left:95.60px;top:123.00px;font-size:16.00px;line-height:17px;color:#000;transform:rotate(0.05deg) scaleX(0.7903);">1 ms</span>
<span class="t" style="left:4.80px;top:149.00px;font-size:17.00px;line-height:19px;color:#000;-webkit-text-stroke:.2px #000;">1</span>
<span class="t" style="left:83.20px;top:149.00px;font-size:16.00px;line-height:17px;color:#000;transform:rotate(0.05deg) scaleX(0.7620);">1 V</span>
<span class="t" style="left:4.80px;top:172.00px;font-size:17.00px;line-height:19px;color:#000;-webkit-text-stroke:.2px #000;">2</span>
<span class="t" style="left:83.20px;top:172.00px;font-size:16.00px;line-height:17px;color:#000;transform:rotate(0.05deg) scaleX(0.7620);">1 V</span>
<span class="t" style="left:4.80px;top:195.00px;font-size:17.00px;line-height:19px;color:#000;-webkit-text-stroke:.2px #000;">3</span>
<span class="t" style="left:83.20px;top:195.00px;font-size:16.00px;line-height:17px;color:#000;transform:rotate(0.05deg) scaleX(0.7620);">1 V</span>
<span class="t" style="left:4.80px;top:218.00px;font-size:17.00px;line-height:19px;color:#000;-webkit-text-stroke:.2px #000;">4</span>
<span class="t" style="left:83.20px;top:218.00px;font-size:16.00px;line-height:17px;color:#000;transform:rotate(0.05deg) scaleX(0.7620);">1 V</span>
<span class="t" style="left:4.80px;top:241.00px;font-size:17.00px;line-height:19px;color:#000;-webkit-text-stroke:.2px #000;">5</span>
<span class="t" style="left:83.20px;top:241.00px;font-size:16.00px;line-height:17px;color:#000;transform:rotate(0.05deg) scaleX(0.7839);">10 V</span>
<span class="t" style="left:4.80px;top:264.00px;font-size:17.00px;line-height:19px;color:#000;-webkit-text-stroke:.2px #000;">6</span>
<span class="t" style="left:83.20px;top:264.00px;font-size:16.00px;line-height:17px;color:#000;transform:rotate(0.05deg) scaleX(0.7620);">1 V</span>
<span class="t" style="left:4.80px;top:287.00px;font-size:17.00px;line-height:19px;color:#000;-webkit-text-stroke:.2px #000;">7</span>
<span class="t" style="left:82.20px;top:287.00px;font-size:16.00px;line-height:17px;color:#000;transform:rotate(0.05deg) scaleX(0.7940);">-1 V</span>
<span class="t" style="left:4.80px;top:310.00px;font-size:17.00px;line-height:19px;color:#000;-webkit-text-stroke:.2px #000;">8</span>
<span class="t" style="left:82.20px;top:310.00px;font-size:16.00px;line-height:17px;color:#000;transform:rotate(0.05deg) scaleX(0.8114);">-1 kV</span>
<span class="t" style="left:24.20px;top:336.00px;font-size:17.00px;line-height:19px;color:#000;-webkit-text-stroke:.2px #000;">1</span>
<span class="t" style="left:82.50px;top:336.00px;font-size:16.00px;line-height:17px;color:#000;transform:rotate(0.05deg) scaleX(0.7912);">0 V</span>
<span class="t" style="left:25.80px;top:359.00px;font-size:16.00px;line-height:17px;color:#000;transform:rotate(0.05deg) scaleX(0.7920);">0000:00:05.444.00</span>
<span class="t" style="left:7.60px;top:382.00px;font-size:20.30px;line-height:22px;color:#000;transform:scaleX(0.9896);-webkit-text-stroke:.3px #000;">A</span>
<span class="t" style="left:25.80px;top:385.00px;font-size:16.00px;line-height:17px;color:#000;transform:rotate(0.05deg) scaleX(0.7920);">0000:00:05.454.92</span>
<span class="t" style="left:9.20px;top:405.00px;font-size:20.30px;line-height:22px;color:#000;transform:scaleX(0.8714);-webkit-text-stroke:.3px #000;">B</span>
<span class="t" style="left:25.80px;top:408.00px;font-size:16.00px;line-height:17px;color:#000;transform:rotate(0.05deg) scaleX(0.7920);">0000:00:05.458.48</span>
<span class="t" style="left:8.80px;top:424.00px;font-size:20.30px;line-height:22px;color:#000;transform:scaleX(0.9647);-webkit-text-stroke:.3px #000;">φ</span>
<span class="t" style="left:25.50px;top:431.00px;font-size:16.00px;line-height:17px;color:#244c9c;transform:rotate(0.05deg) scaleX(0.8623);">...</span>
<div class="r" style="left:2px;top:456px;width:168px;height:18px;box-sizing:border-box;border:1px solid #9aa2b1;border-bottom-color:#8a92a3;box-shadow:inset 1px 1px 0 #fff;background:linear-gradient(180deg,#ffffff 0,#f2f4f8 22%,#d2d8e3 50%,#b4bccb 75%,#a3acbe 100%)"></div>
<div class="r" style="left:2px;top:474px;width:168px;height:29px;box-sizing:border-box;border:1px solid #a6adb9;border-top:none;background:#f3fff0"></div>
<span class="t" style="left:5.60px;top:456.00px;font-size:14.00px;line-height:16px;color:#000;font-weight:bold;">1</span>
<svg style="left:13.500px;top:461px" width="6" height="8" viewBox="0 0 6 8"><path d="M0 3h1.500l-0.700-2.500l4.700 3.500l-4.700 3.500l0.700-2.500h-1.500z" fill="#2f63ae"/></svg>
<span class="t" style="left:19.30px;top:456.00px;font-size:14.50px;line-height:16px;color:#000;transform:scaleX(0.8373);">in1</span>
<span class="t" style="left:4.30px;top:474.00px;font-size:14.50px;line-height:16px;color:#000;transform:scaleX(0.9690);">A:4.557 V</span>
<span class="t" style="left:4.30px;top:487.00px;font-size:14.50px;line-height:16px;color:#000;transform:scaleX(0.9463);">Δ:21.84 mV</span>
<div class="r" style="left:2px;top:504px;width:168px;height:18px;box-sizing:border-box;border:1px solid #9aa2b1;border-bottom-color:#8a92a3;box-shadow:inset 1px 1px 0 #fff;background:linear-gradient(180deg,#ffffff 0,#f2f4f8 22%,#d2d8e3 50%,#b4bccb 75%,#a3acbe 100%)"></div>
<div class="r" style="left:2px;top:522px;width:168px;height:29px;box-sizing:border-box;border:1px solid #a6adb9;border-top:none;background:#f3fff0"></div>
<span class="t" style="left:5.60px;top:504.00px;font-size:14.00px;line-height:16px;color:#000;font-weight:bold;">2</span>
<svg style="left:13.500px;top:509px" width="6" height="8" viewBox="0 0 6 8"><path d="M0 3h1.500l-0.700-2.500l4.700 3.500l-4.700 3.500l0.700-2.500h-1.500z" fill="#2f63ae"/></svg>
<span class="t" style="left:19.30px;top:504.00px;font-size:14.50px;line-height:16px;color:#000;transform:scaleX(0.8373);">in2</span>
<span class="t" style="left:4.30px;top:522.00px;font-size:14.50px;line-height:16px;color:#000;transform:scaleX(0.9690);">A:4.608 V</span>
<span class="t" style="left:4.30px;top:535.00px;font-size:14.50px;line-height:16px;color:#000;transform:scaleX(0.9544);">Δ:-4.47 V</span>
<div class="r" style="left:2px;top:552px;width:168px;height:18px;box-sizing:border-box;border:1px solid #9aa2b1;border-bottom-color:#8a92a3;box-shadow:inset 1px 1px 0 #fff;background:linear-gradient(180deg,#ffffff 0,#f2f4f8 22%,#d2d8e3 50%,#b4bccb 75%,#a3acbe 100%)"></div>
<div class="r" style="left:2px;top:570px;width:168px;height:29px;box-sizing:border-box;border:1px solid #a6adb9;border-top:none;background:#f3fff0"></div>
<span class="t" style="left:5.60px;top:552.00px;font-size:14.00px;line-height:16px;color:#000;font-weight:bold;">3</span>
<svg style="left:13.500px;top:557px" width="6" height="8" viewBox="0 0 6 8"><path d="M0 3h1.500l-0.700-2.500l4.700 3.500l-4.700 3.500l0.700-2.500h-1.500z" fill="#2f63ae"/></svg>
<span class="t" style="left:19.30px;top:552.00px;font-size:14.50px;line-height:16px;color:#000;transform:scaleX(0.8373);">in3</span>
<span class="t" style="left:4.30px;top:570.00px;font-size:14.50px;line-height:16px;color:#000;transform:scaleX(0.9534);">A:131 mV</span>
<span class="t" style="left:4.30px;top:583.00px;font-size:14.50px;line-height:16px;color:#000;transform:scaleX(0.9471);">Δ:-7.28 mV</span>
<div class="r" style="left:2px;top:600px;width:168px;height:18px;box-sizing:border-box;border:1px solid #9aa2b1;border-bottom-color:#8a92a3;box-shadow:inset 1px 1px 0 #fff;background:linear-gradient(180deg,#ffffff 0,#f2f4f8 22%,#d2d8e3 50%,#b4bccb 75%,#a3acbe 100%)"></div>
<div class="r" style="left:2px;top:618px;width:168px;height:29px;box-sizing:border-box;border:1px solid #a6adb9;border-top:none;background:#f3fff0"></div>
<span class="t" style="left:5.60px;top:600.00px;font-size:14.00px;line-height:16px;color:#000;font-weight:bold;">5</span>
<svg style="left:13.500px;top:605px" width="6" height="8" viewBox="0 0 6 8"><path d="M0 3h1.500l-0.700-2.500l4.700 3.500l-4.700 3.500l0.700-2.500h-1.500z" fill="#2f63ae"/></svg>
<span class="t" style="left:19.30px;top:600.00px;font-size:14.50px;line-height:16px;color:#000;transform:scaleX(0.8373);">in5</span>
<span class="t" style="left:4.30px;top:618.00px;font-size:14.50px;line-height:16px;color:#000;transform:scaleX(0.9656);">A:12.4 V</span>
<span class="t" style="left:4.30px;top:631.00px;font-size:14.50px;line-height:16px;color:#000;transform:scaleX(0.9217);">Δ:0 V</span>
<div class="r" style="left:2px;top:648px;width:168px;height:18px;box-sizing:border-box;border:1px solid #9aa2b1;border-bottom-color:#8a92a3;box-shadow:inset 1px 1px 0 #fff;background:linear-gradient(180deg,#ffffff 0,#f2f4f8 22%,#d2d8e3 50%,#b4bccb 75%,#a3acbe 100%)"></div>
<div class="r" style="left:2px;top:666px;width:168px;height:29px;box-sizing:border-box;border:1px solid #a6adb9;border-top:none;background:#f3fff0"></div>
<span class="t" style="left:4.50px;top:648.00px;font-size:14.50px;line-height:16px;color:#000;transform:scaleX(0.8739);">A-B интервал</span>
<span class="t" style="left:7.20px;top:666.00px;font-size:14.50px;line-height:16px;color:#000;transform:scaleX(0.9483);">T:3.56 ms</span>
<span class="t" style="left:4.30px;top:679.00px;font-size:14.50px;line-height:16px;color:#000;transform:scaleX(0.9618);">F:280.9 Hz</span>
<!-- 50_scope.py -->
<div class="r" style="left:174px;top:69px;width:831px;height:621px;background:#000"></div>
<svg style="left:174px;top:69px" width="831" height="621" viewBox="0 0 831 621" shape-rendering="crispEdges" fill="none">
<path d="M24.5 4V575M49.5 4V575M74.5 4V575M99.5 4V575M124.5 4V575M149.5 4V575M174.5 4V575M199.5 4V575M224.5 4V575M249.5 4V575M274.5 4V575M299.5 4V575M324.5 4V575M349.5 4V575M374.5 4V575M399.5 4V575M424.5 4V575M449.5 4V575M474.5 4V575M499.5 4V575M524.5 4V575M549.5 4V575M574.5 4V575M599.5 4V575M624.5 4V575M649.5 4V575M674.5 4V575M699.5 4V575M724.5 4V575M749.5 4V575M774.5 4V575M799.5 4V575M824.5 4V575" stroke="#8a8a8a" stroke-width="1" stroke-dasharray="1 4"/>
<path d="M24 24.5H830M24 49.5H830M24 74.5H830M24 99.5H830M24 124.5H830M24 149.5H830M24 174.5H830M24 199.5H830M24 224.5H830M24 249.5H830M24 274.5H830M24 299.5H830M24 324.5H830M24 349.5H830M24 374.5H830M24 399.5H830M24 424.5H830M24 449.5H830M24 474.5H830M24 499.5H830M24 524.5H830M24 549.5H830M24 574.5H830" stroke="#8a8a8a" stroke-width="1" stroke-dasharray="1 4"/>
<path d="M297.5 0V597" stroke="#b8ac00"/>
<path d="M386.5 0V597" stroke="#b8ac00"/>
<polyline points="24.5,246.5 44.5,246.5 44.5,134.5 63.5,134.5 63.5,246.5 96.5,246.5 96.5,134.5 114.5,134.5 114.5,246.5 148.5,246.5 148.5,134.5 166.5,134.5 166.5,246.5 199.5,246.5 199.5,134.5 218.5,134.5 218.5,246.5 251.5,246.5 251.5,134.5 270.5,134.5 270.5,246.5 296.5,246.5 296.5,134.5 323.5,134.5 323.5,246.5 356.5,246.5 356.5,134.5 375.5,134.5 375.5,246.5 409.5,246.5 409.5,134.5 428.5,134.5 428.5,246.5 462.5,246.5 462.5,134.5 481.5,134.5 481.5,246.5 514.5,246.5 514.5,134.5 534.5,134.5 534.5,246.5 567.5,246.5 567.5,134.5 587.5,134.5 587.5,246.5 621.5,246.5 621.5,134.5 640.5,134.5 640.5,246.5 674.5,246.5 674.5,134.5 694.5,134.5 694.5,246.5 727.5,246.5 727.5,134.5 747.5,134.5 747.5,246.5 781.5,246.5 781.5,134.5 801.5,134.5 801.5,246.5 830.5,246.5" stroke="#ffb46e" stroke-width="1" stroke-linecap="square"/>
<polyline points="24.5,385.5 79.5,385.5 80.5,386.5 95.5,386.5 96.5,385.5 98.5,385.5 99.5,386.5 102.5,386.5 103.5,385.5 107.5,385.5 108.5,386.5 110.5,386.5 111.5,385.5 122.5,385.5 123.5,386.5 125.5,386.5 126.5,385.5 331.5,385.5 332.5,386.5 344.5,386.5 345.5,385.5 347.5,385.5 348.5,386.5 351.5,386.5 352.5,385.5 355.5,385.5 356.5,386.5 357.5,386.5 358.5,385.5 582.5,385.5 583.5,386.5 596.5,386.5 597.5,385.5 600.5,385.5 601.5,386.5 604.5,386.5 605.5,385.5 608.5,385.5 609.5,386.5 611.5,386.5 612.5,385.5 694.5,385.5 694.5,369.5 695.5,371.5 695.5,368.5 696.5,370.5 696.5,368.5 697.5,368.5 698.5,367.5 701.5,367.5 702.5,366.5 704.5,366.5 705.5,365.5 707.5,365.5 708.5,364.5 711.5,364.5 712.5,363.5 714.5,363.5 715.5,362.5 718.5,362.5 719.5,361.5 830.5,361.5" stroke="#ffff66" stroke-width="1" stroke-linecap="square"/>
<polyline points="24.5,530.5 82.5,530.5 83.5,529.5 84.5,530.5 94.5,530.5 95.5,529.5 97.5,529.5 98.5,530.5 109.5,530.5 110.5,529.5 112.5,529.5 113.5,530.5 126.5,530.5 127.5,529.5 129.5,529.5 130.5,530.5 175.5,530.5 176.5,529.5 177.5,530.5 196.5,530.5 197.5,529.5 199.5,529.5 200.5,530.5 215.5,530.5 216.5,529.5 217.5,530.5 229.5,530.5 230.5,529.5 231.5,530.5 244.5,530.5 245.5,529.5 246.5,530.5 337.5,530.5 338.5,529.5 340.5,529.5 341.5,530.5 346.5,530.5 347.5,529.5 349.5,529.5 350.5,530.5 691.5,530.5 694.5,530.5 694.5,559.5 702.5,559.5 703.5,558.5 716.5,558.5 717.5,557.5 719.5,557.5 719.5,556.5 720.5,553.5 721.5,552.5 721.5,546.5 722.5,545.5 722.5,540.5 723.5,539.5 723.5,538.5 724.5,537.5 728.5,537.5 729.5,536.5 741.5,536.5 742.5,535.5 743.5,536.5 744.5,536.5 745.5,535.5 830.5,535.5" stroke="#f07c7c" stroke-width="1" stroke-linecap="square"/>
<polyline points="24.5,121.5 295.5,121.5 296.5,120.5 296.5,14.5 297.5,13.5 297.5,10.5 386.5,10.5 386.5,121.5 830.5,121.5" stroke="#ffffff" stroke-width="1" stroke-linecap="square"/>
<rect x="291.5" y="597.5" width="11" height="11" stroke="#b8ac00"/>
<rect x="291.5" y="609.5" width="11" height="11" stroke="#b8ac00" stroke-dasharray="1 1"/>
<rect x="380.5" y="597.5" width="11" height="11" stroke="#b8ac00" stroke-dasharray="1 1"/>
<rect x="380.5" y="609.5" width="11" height="11" stroke="#b8ac00"/>
<path d="M291 609.5h11M380 608.5h11" stroke="#b8ac00" stroke-dasharray="1 1"/>
<path d="M14 123h2v-3l5 4.5l-5 4.5v-3h-2z" fill="#fff" stroke="none" shape-rendering="auto"/>
<path d="M14 248h2v-3l5 4.5l-5 4.5v-3h-2z" fill="#ffb46e" stroke="none" shape-rendering="auto"/>
<path d="M14 387h2v-3l5 4.5l-5 4.5v-3h-2z" fill="#ffff66" stroke="none" shape-rendering="auto"/>
<path d="M14 559h2v-3l5 4.5l-5 4.5v-3h-2z" fill="#f07c7c" stroke="none" shape-rendering="auto"/>
</svg>
<span class="t" style="left:177.50px;top:185.00px;font-size:16.00px;line-height:17px;color:#fff;font-weight:bold;">1</span>
<span class="t" style="left:177.50px;top:310.00px;font-size:16.00px;line-height:17px;color:#ffb46e;font-weight:bold;">2</span>
<span class="t" style="left:177.50px;top:449.00px;font-size:16.00px;line-height:17px;color:#ffff66;font-weight:bold;">3</span>
<span class="t" style="left:177.50px;top:621.00px;font-size:16.00px;line-height:17px;color:#f07c7c;font-weight:bold;">5</span>
<span class="t" style="left:467.30px;top:666.00px;font-size:10.50px;line-height:12px;color:#b8ac00;font-weight:bold;">A</span>
<span class="t" style="left:556.30px;top:678.00px;font-size:10.50px;line-height:12px;color:#b8ac00;font-weight:bold;">B</span>
<!-- 60_bars.py -->
<div class="r" style="left:1005px;top:69px;width:18px;height:621px;background:linear-gradient(90deg,#fbfbfb 0,#f2f2f2 25%,#efefef 100%)"></div>
<div class="r" style="left:1023px;top:69px;width:1px;height:641px;background:#f8f8f8"></div>
<div class="r" style="left:1006px;top:378px;width:15px;height:15px;box-sizing:border-box;border:1px solid #9a9a9a;border-radius:2px;box-shadow:inset 0 0 0 1px #fff;background:linear-gradient(90deg,#f6f6f6 0,#ececec 48%,#d6d6d6 52%,#cfcfcf 100%)"></div>
<div class="r" style="left:172px;top:690px;width:852px;height:20px;background:#f0f0f0"></div>
<div class="r" style="left:174px;top:690px;width:831px;height:17px;background:linear-gradient(180deg,#fbfbfb 0,#f1f1f1 30%,#ededed 100%)"></div>
<div class="r" style="left:506px;top:691px;width:15px;height:15px;box-sizing:border-box;border:1px solid #9a9a9a;border-radius:2px;box-shadow:inset 0 0 0 1px #fff;background:linear-gradient(180deg,#f6f6f6 0,#ececec 48%,#d6d6d6 52%,#cfcfcf 100%)"></div>
<div class="r" style="left:172px;top:690px;width:1px;height:18px;background:#8e9299"></div>
<div class="r" style="left:173px;top:690px;width:1px;height:18px;background:#f4f4f4"></div>
<svg style="left:0;top:0" width="1024" height="768" viewBox="0 0 1024 768" fill="none"><path d="M1011 80l3.500-4.500l3.500 4.500z" fill="#484848"/><path d="M1011 679.500l3.500 4.500l3.500-4.500z" fill="#484848"/><path d="M184.500 695l-5 3.500l5 3.500z" fill="#484848"/><path d="M995 695l4.500 3.500l-4.500 3.500z" fill="#484848"/></svg>
<div class="r" style="left:173px;top:707px;width:851px;height:1px;background:#f4f4f4"></div>
<div class="r" style="left:0;top:707px;width:173px;height:1px;background:#a2a7b0"></div>
<div class="r" style="left:0;top:708px;width:1024px;height:1px;background:#fdfdfd"></div>
<div class="r" style="left:0;top:709px;width:1024px;height:1px;background:#9b9b9b"></div>
<div class="r" style="left:0;top:710px;width:1024px;height:18px;background:#f1efee"></div>
<div class="r" style="left:695px;top:711px;width:1px;height:16px;background:#c9c7c6"></div>
<div class="r" style="left:696px;top:711px;width:1px;height:16px;background:#fff"></div>
<span class="t" style="left:2.50px;top:713.00px;font-size:12.30px;line-height:14px;color:#000;transform:scaleX(0.9598);">Управление каналом 1 осциллографа.</span>
<span class="t" style="left:219.80px;top:713.00px;font-size:12.30px;line-height:14px;color:#000;transform:scaleX(0.9594);">&lt;Используйте стрелку</span>
<span class="t" style="left:346.30px;top:713.00px;font-size:12.30px;line-height:14px;color:#000;transform:scaleX(0.9596);">вправо для отображения</span>
<span class="t" style="left:487.70px;top:713.00px;font-size:12.30px;line-height:14px;color:#000;transform:scaleX(0.9544);">панели управления</span>
<span class="t" style="left:599.00px;top:713.00px;font-size:12.30px;line-height:14px;color:#000;transform:scaleX(0.9429);">или удержите кнс</span>
<span class="t" style="left:699.60px;top:713.00px;font-size:12.30px;line-height:14px;color:#000;transform:scaleX(0.9432);">Полное время файла:</span>
<span class="t" style="left:823.10px;top:713.00px;font-size:12.30px;line-height:14px;color:#000;transform:scaleX(0.8685);">0000:00:13.557.22</span>
<!-- 70_taskbar.py -->
<div class="r" style="left:0;top:728px;width:1024px;height:40px;background:linear-gradient(90deg,#2b6e9b 0,#2a6b9a 300px,#27679c 560px,#1d5b97 700px,#1a5395 860px,#194e8f 1024px)"></div>
<div class="r" style="left:0;top:728px;width:1024px;height:40px;background:linear-gradient(180deg,rgba(0,0,0,.45) 0,rgba(0,0,0,.45) 1px,rgba(255,255,255,.35) 1px,rgba(255,255,255,.35) 2px,rgba(255,255,255,.06) 2px,rgba(255,255,255,0) 45%,rgba(0,0,0,.10) 100%)"></div>
<div class="r" style="left:690px;top:729px;width:334px;height:39px;overflow:hidden"><div class="r" style="left:87px;top:-26px;width:20px;height:90px;background:linear-gradient(90deg,rgba(255,255,255,0),rgba(255,255,255,.24),rgba(255,255,255,0));transform:rotate(-32deg)"></div></div>
<div class="r" style="left:60px;top:729px;width:111px;height:39px;box-sizing:border-box;border:1px solid rgba(10,30,50,.75);border-radius:3px;border-bottom:none"></div><div class="r" style="left:61px;top:730px;width:109px;height:38px;box-sizing:border-box;border:1px solid rgba(255,255,255,.42);border-bottom:none;border-radius:2px;background:linear-gradient(180deg,rgba(255,255,255,.30) 0,rgba(255,255,255,.20) 48%,rgba(255,255,255,.10) 52%,rgba(255,255,255,.14) 100%)"></div>
<div class="r" style="left:344px;top:729px;width:112px;height:39px;box-sizing:border-box;border:1px solid rgba(10,30,50,.75);border-radius:3px;border-bottom:none"></div><div class="r" style="left:345px;top:730px;width:110px;height:38px;box-sizing:border-box;border:1px solid rgba(255,255,255,.42);border-bottom:none;border-radius:2px;background:linear-gradient(180deg,rgba(255,255,255,.30) 0,rgba(255,255,255,.20) 48%,rgba(255,255,255,.10) 52%,rgba(255,255,255,.14) 100%)"></div>
<div class="r" style="left:458px;top:729px;width:112px;height:39px;box-sizing:border-box;border:1px solid rgba(10,30,50,.75);border-radius:3px;border-bottom:none"></div><div class="r" style="left:459px;top:730px;width:110px;height:38px;box-sizing:border-box;border:1px solid rgba(255,255,255,.42);border-bottom:none;border-radius:2px;background:linear-gradient(180deg,rgba(255,255,255,.30) 0,rgba(255,255,255,.20) 48%,rgba(255,255,255,.10) 52%,rgba(255,255,255,.14) 100%)"></div>
<div class="r" style="left:572px;top:729px;width:111px;height:39px;box-sizing:border-box;border:1px solid rgba(10,30,50,.75);border-radius:3px;border-bottom:none"></div><div class="r" style="left:573px;top:730px;width:109px;height:38px;box-sizing:border-box;border:1px solid rgba(255,255,255,.75);border-bottom:none;border-radius:2px;background:linear-gradient(135deg,rgba(255,255,255,.62) 0,rgba(255,255,255,.38) 35%,rgba(255,255,255,.16) 70%,rgba(255,255,255,.22) 100%)"></div>
<div class="r" style="left:1010px;top:729px;width:14px;height:39px;box-sizing:border-box;border-left:1px solid rgba(10,25,50,.8);background:linear-gradient(90deg,rgba(255,255,255,.35) 0,rgba(255,255,255,.10) 25%,rgba(255,255,255,.05) 100%)"></div>
<svg style="left:0;top:728px" width="1024" height="40" viewBox="0 728 1024 40" fill="none">
<defs>
<radialGradient id="orb" cx=".5" cy=".55" r=".6"><stop offset="0" stop-color="#1560a4"/><stop offset=".7" stop-color="#0c4c88"/><stop offset="1" stop-color="#0a3c70"/></radialGradient>
<linearGradient id="orbhl" x1="0" y1="0" x2="0" y2="1"><stop offset="0" stop-color="#fff" stop-opacity=".68"/><stop offset="1" stop-color="#fff" stop-opacity=".28"/></linearGradient>
<linearGradient id="fr" x1="0" y1="0" x2="1" y2="1"><stop offset="0" stop-color="#e8401c"/><stop offset="1" stop-color="#fca428"/></linearGradient><linearGradient id="fg" x1="0" y1="1" x2="1" y2="0"><stop offset="0" stop-color="#c4e070"/><stop offset="1" stop-color="#4ca42c"/></linearGradient><linearGradient id="fb" x1="0" y1="1" x2="1" y2="0"><stop offset="0" stop-color="#1c84d4"/><stop offset="1" stop-color="#8cc8f4"/></linearGradient><linearGradient id="fy" x1="0" y1="0" x2="1" y2="1"><stop offset="0" stop-color="#fcdc5c"/><stop offset="1" stop-color="#f8a018"/></linearGradient>
<radialGradient id="orb2" cx=".5" cy="1" r=".55"><stop offset="0" stop-color="#20e0ff" stop-opacity=".95"/><stop offset="1" stop-color="#38d8ff" stop-opacity="0"/></radialGradient>
<linearGradient id="kmp" x1="0" y1="0" x2="1" y2="0"><stop offset="0" stop-color="#4a2496"/><stop offset="1" stop-color="#a98be0"/></linearGradient>
<linearGradient id="kmp2" x1="0" y1="0" x2="1" y2="0"><stop offset="0" stop-color="#b8a0d8"/><stop offset="1" stop-color="#efe6f6"/></linearGradient>
<radialGradient id="ffx" cx=".45" cy=".4" r=".6"><stop offset="0" stop-color="#5cc0f0"/><stop offset=".6" stop-color="#2a6ccc"/><stop offset="1" stop-color="#1c2c88"/></radialGradient>
<linearGradient id="ffo" x1="0" y1="0" x2=".6" y2="1"><stop offset="0" stop-color="#fdb024"/><stop offset=".5" stop-color="#f07818"/><stop offset="1" stop-color="#d8441c"/></linearGradient>
</defs>
<circle cx="27" cy="747.800" r="18" fill="url(#orb)" stroke="#0c3a66" stroke-width="1.400"/>
<circle cx="27" cy="747.800" r="17" fill="url(#orb2)"/>
<path d="M10.500 747q0-9 5.500-13.500q5-4 11-4t11 4q5.500 4.500 5.500 13.500q-8-2.500-16.500-.500t-16.500 .500z" fill="url(#orbhl)"/>
<circle cx="27" cy="747.800" r="18.400" stroke="#a8c8e0" stroke-opacity=".7" stroke-width=".8"/>
<path d="M19.500 738q4.500-2 9 0l-1.800 8.300q-4.200-2-9 0z" fill="url(#fr)"/><path d="M30 739.500q4 2.500 9 0l-1.800 8.500q-4.700 2.700-9 0z" fill="url(#fg)"/><path d="M17 747.800q4.500-2 9 0l-1.800 8.400q-4.200-2.200-9 0z" fill="url(#fb)"/><path d="M27.500 749.300q4 2.600 9 0l-1.800 8.400q-4.700 2.700-9 0z" fill="url(#fy)"/>
<g transform="translate(69,732)"><path d="M1 3l8-2.500v28l-8 2.500z" fill="#e9cf7c" stroke="#c4a24c" stroke-width=".8"/><path d="M9 1l12 1.500v24l-12 3z" fill="#f6e7a6" stroke="#cfb05c" stroke-width=".8"/><path d="M3 5l7-2v27l-7 2z" fill="#f3dc8c" stroke="#c4a24c" stroke-width=".8"/><path d="M13 13h8v8h4.500l-8.500 9.500l-8.500-9.500h4.500z" fill="#2c8ee4" stroke="#1a5ca8" stroke-width=".8"/><path d="M14 14h3v8h-3z" fill="#6cc0f8" opacity=".7"/></g>
<path d="M184 735l17 13.500l-17 13.500z" fill="url(#kmp)" stroke="#3a1c78" stroke-width=".8"/><path d="M216 735l-17 13.500l17 13.500z" fill="url(#kmp2)" stroke="#8c74b4" stroke-width=".8"/>
<rect x="247" y="738" width="21" height="21" fill="#9cc8ec" stroke="#6ca0cc" stroke-width=".8"/><rect x="245" y="737.500" width="21" height="22" fill="#8abce4" stroke="#5c94c4" stroke-width=".8"/><rect x="243" y="737" width="21" height="23" fill="#78b0dc" stroke="#4c88bc" stroke-width=".8"/><circle cx="253.500" cy="748.500" r="9" fill="#f4841c" stroke="#fbb468" stroke-width="1"/><path d="M250.500 743v11l9-5.500z" fill="#fff"/>
<path d="M299 733h20l11 14.500l-11 14.500h-20z" fill="#5a92cc" stroke="#3c70ac" stroke-width="1"/><path d="M299 733h20l5.500 7h-25.500z" fill="#7cacdc" opacity=".8"/><path d="M302 743h5l6-5.500v21l-6-5.500h-5z" fill="#fff"/><path d="M315.500 743.500q3 4.500 0 9.500M318 740q5.500 8 0 16.500" stroke="#fff" stroke-width="2"/>
<circle cx="368" cy="748" r="14.800" fill="url(#ffo)"/>
<path d="M378 736.500q5.500 4.500 5 12q-.500 7-5.500 11q3-6 2-12.500q-.800-5.500-1.500-10.500z" fill="#ffd23c"/>
<circle cx="368.500" cy="744.500" r="9.700" fill="url(#ffx)"/>
<path d="M355.500 738.500q4 1.500 8.500 1q-1.500 2.500 .500 4.500q2.500 1 3.500 3q-3 .500-4 3q2.500 3.500 7 3q4-.800 6.500-4q-.500 6.500-6.500 9q-7 2.500-12.500-2.500q-5-5.500-3-17z" fill="url(#ffo)"/>
<path d="M354.500 736q1.500 2.500 4 3.500l-3.500 4z" fill="#f89820"/>
<circle cx="476" cy="742" r="9" fill="#14b0f0"/><circle cx="488" cy="754" r="9" fill="#14b0f0"/><circle cx="482" cy="748" r="12.500" fill="#14b0f0"/><text x="482" y="757" text-anchor="middle" font-family="Liberation Sans,sans-serif" font-weight="bold" font-size="25" fill="#fff">S</text>
<g transform="translate(580,734)"><rect x="0.500" y="0.500" width="30" height="27" rx="1.500" fill="#50545c" stroke="#2c3038"/><rect x="2.500" y="2.500" width="25" height="17" fill="#0e2c74" stroke="#0c1c40"/><path d="M4 8q3-8 6.500 0t6.500 0t6.500-1.500" stroke="#30e848" stroke-width="1.500"/><path d="M4 17.500h3.500v-6h4.500v6h4v-6h4.500v6h4" stroke="#30e848" stroke-width="1.500"/><path d="M3 23h16" stroke="#a8acb4" stroke-width="1.800" stroke-dasharray="1.500 1.200"/><circle cx="22" cy="23" r="1.600" fill="#b8bcc4"/><circle cx="26.500" cy="23" r="1.600" fill="#b8bcc4"/><path d="M2 28.500h5M24 28.500h5" stroke="#20242c" stroke-width="1.500"/></g>
<circle cx="731.500" cy="746" r="5" fill="#8cc41c"/><circle cx="738" cy="752.500" r="5" fill="#8cc41c"/><circle cx="734.500" cy="749" r="6.800" fill="#8cc41c"/><path d="M731 749l2.500 2.500l4.500-5" stroke="#fff" stroke-width="1.700"/>
<rect x="750" y="741" width="16" height="16" fill="#ec1c34"/><path d="M758 741.500l7.500 7.500l-7.500 7.500l-7.500-7.500z" fill="#fff"/><path d="M753 748h8l-2-3M763 750.500h-8l2 3" stroke="#ec1c34" stroke-width="1.800"/><path d="M757.500 753.500l2.500 3l5-6.500" stroke="#18c428" stroke-width="2.400"/>
<rect x="774.500" y="741.500" width="15" height="15" rx="2" fill="#d41c1c" stroke="#8c1010"/><rect x="777" y="744" width="8" height="10" fill="none" stroke="#fff" stroke-width="1.300"/><path d="M780 753q1-6 6-8.500" stroke="#fff" stroke-width="2.200"/><path d="M783.500 742.500h5v5z" fill="#fff"/>
<path d="M806 741.500l6 2v6q0 5-6 8q-6-3-6-8v-6z" fill="#2c9c3c" stroke="#c8d4cc" stroke-width=".9"/><text x="806" y="753.500" text-anchor="middle" font-family="Liberation Sans,sans-serif" font-weight="bold" font-size="9.500" fill="#fff">P</text>
<ellipse cx="831" cy="748" rx="8.500" ry="5" transform="rotate(38 831 748)" fill="#181818" stroke="#d8d8d8" stroke-width=".9"/><circle cx="829" cy="749.500" r="1.500" fill="#e8e8e8"/><path d="M826 753l-2 4h6z" fill="#d0d0d0"/>
<path d="M854 742l8 14.500h-16z" fill="#e43424" stroke="#b01c14" stroke-width=".8"/><path d="M854 746.500v5.500" stroke="#fff" stroke-width="2.200"/><rect x="853" y="753.300" width="2" height="2" fill="#fff"/>
<path d="M871.500 742v15" stroke="#fff" stroke-width="1.500"/><path d="M872.500 743q3.500-1.500 6 0t6 0v7q-3 1.500-6 0t-6 0z" fill="#f4f6f8" stroke="#c0c8d0" stroke-width=".6"/><circle cx="881.500" cy="752.500" r="4.300" fill="#e42c24" stroke="#fff" stroke-width=".7"/><path d="M879.500 750.500l4 4M883.500 750.500l-4 4" stroke="#fff" stroke-width="1.400"/>
<rect x="899.500" y="744.500" width="10" height="8" fill="#1c3c6c" stroke="#e8ecf0" stroke-width="1.300"/><path d="M904.500 753v2.500M900 756.500h9" stroke="#e8ecf0" stroke-width="1.500"/><path d="M895 743v3M898.500 743v3" stroke="#fff" stroke-width="1"/><path d="M894.500 746h4.500v3h-4.500zM896.800 749v6h4" stroke="#fff" stroke-width="1.200"/>
<path d="M919 746.500h3l4-4v13l-4-4h-3z" fill="#fff" stroke="#c8d0d8" stroke-width=".5"/><path d="M928 746.500q1.500 2.500 0 5M930.500 744.500q2.500 4.500 0 9M933 742.500q3.500 6.500 0 13" stroke="#fff" stroke-width="1.100"/>
</svg>
<span class="t" style="left:103.50px;top:741.00px;font-size:12.30px;line-height:14px;color:#fff;transform:scaleX(0.9596);text-shadow:0 0 2px rgba(0,0,0,.35);-webkit-text-stroke:0;">Загрузки</span>
<span class="t" style="left:388.50px;top:741.00px;font-size:12.30px;line-height:14px;color:#fff;transform:scaleX(0.9844);text-shadow:0 0 2px rgba(0,0,0,.35);-webkit-text-stroke:0;">www.alfl...</span>
<span class="t" style="left:502.50px;top:741.00px;font-size:12.30px;line-height:14px;color:#fff;transform:scaleX(0.8794);text-shadow:0 0 2px rgba(0,0,0,.35);-webkit-text-stroke:0;">Skype™ - ...</span>
<span class="t" style="left:616.50px;top:741.00px;font-size:12.30px;line-height:14px;color:#fff;transform:scaleX(0.8749);text-shadow:0 0 2px rgba(0,0,0,.35);-webkit-text-stroke:0;">USB Oscil...</span>
<span class="t" style="left:695.50px;top:739.00px;font-size:12.30px;line-height:14px;color:#e8eef6;transform:scaleX(0.8724);-webkit-text-stroke:0;">RU</span>
<span class="t" style="left:961.50px;top:734.00px;font-size:12.30px;line-height:14px;color:#fff;transform:scaleX(0.8610);-webkit-text-stroke:0;">22:51</span>
<span class="t" style="left:951.50px;top:750.00px;font-size:12.30px;line-height:14px;color:#fff;transform:scaleX(0.9713);-webkit-text-stroke:0;">17/03/17</span>
</div>
</body></html>
